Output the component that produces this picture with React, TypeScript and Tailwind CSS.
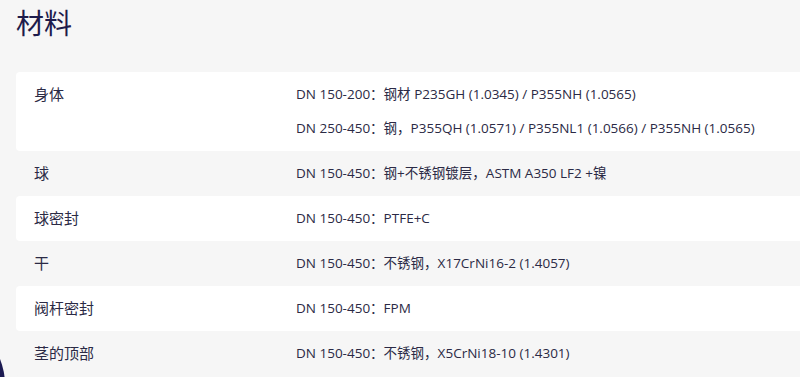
const rows: { label: string; values: string[] }[] = [
  {
    label: '身体',
    values: [
      'DN 150-200：钢材 P235GH (1.0345) / P355NH (1.0565)',
      'DN 250-450：钢，P355QH (1.0571) / P355NL1 (1.0566) / P355NH (1.0565)',
    ],
  },
  { label: '球', values: ['DN 150-450：钢+不锈钢镀层，ASTM A350 LF2 +镍'] },
  { label: '球密封', values: ['DN 150-450：PTFE+C'] },
  { label: '干', values: ['DN 150-450：不锈钢，X17CrNi16-2 (1.4057)'] },
  { label: '阀杆密封', values: ['DN 150-450：FPM'] },
  { label: '茎的顶部', values: ['DN 150-450：不锈钢，X5CrNi18-10 (1.4301)'] },
];

export default function App() {
  return (
    <div
      className="relative min-h-[377px] overflow-hidden bg-[#f6f6f6] pl-4 text-[#2b2a45]"
      style={{ fontFamily: '"Open Sans", "Noto Sans CJK SC", sans-serif' }}
    >
      <h1 className="mt-[2px] mb-[28px] text-[28px] leading-[42px] font-normal text-[#1e1b4b]">
        材料
      </h1>

      {/* Materials table */}
      <div className="-mr-4">
        {rows.map((row, i) => (
          <div
            key={row.label}
            className={`flex rounded-l px-[18px] py-3 leading-[21px] ${
              i % 2 === 0 ? 'bg-white' : 'bg-[#f6f6f6]'
            }`}
          >
            <div className="w-[262px] shrink-0 text-[15px]">{row.label}</div>
            <div className="flex flex-col gap-[13px] whitespace-nowrap text-[13.5px]">
              {row.values.map((v) => (
                <span key={v}>{v}</span>
              ))}
            </div>
          </div>
        ))}
      </div>

      {/* chat bubble peeking in */}
      <div className="absolute left-[-135px] top-[315px] h-[140px] w-[140px] rounded-full bg-[#1c1a52]" />
    </div>
  );
}
